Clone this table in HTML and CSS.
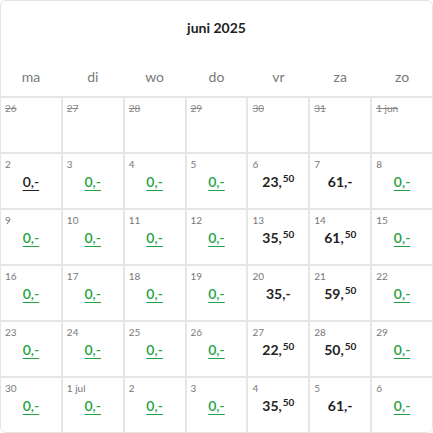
FILE: index.html
```html
<!DOCTYPE html>
<html lang="nl">
<head>
<meta charset="utf-8">
<link rel="stylesheet" href="styles.css">
</head>
<body>
<div class="card">
  <div class="head">
    <div class="title">juni 2025</div>
    <div class="weekdays">
      <span>ma</span><span>di</span><span>wo</span><span>do</span><span>vr</span><span>za</span><span>zo</span>
    </div>
  </div>
  <div class="grid">
    <div class="cell past"><span class="num">26</span></div>
    <div class="cell past"><span class="num">27</span></div>
    <div class="cell past"><span class="num">28</span></div>
    <div class="cell past"><span class="num">29</span></div>
    <div class="cell past"><span class="num">30</span></div>
    <div class="cell past"><span class="num">31</span></div>
    <div class="cell past"><span class="num">1 jun</span></div>

    <div class="cell"><span class="num">2</span><a class="price sel">0,-</a></div>
    <div class="cell"><span class="num">3</span><a class="price free">0,-</a></div>
    <div class="cell"><span class="num">4</span><a class="price free">0,-</a></div>
    <div class="cell"><span class="num">5</span><a class="price free">0,-</a></div>
    <div class="cell"><span class="num">6</span><span class="price">23,<sup>50</sup></span></div>
    <div class="cell"><span class="num">7</span><span class="price">61,-</span></div>
    <div class="cell"><span class="num">8</span><a class="price free">0,-</a></div>

    <div class="cell"><span class="num">9</span><a class="price free">0,-</a></div>
    <div class="cell"><span class="num">10</span><a class="price free">0,-</a></div>
    <div class="cell"><span class="num">11</span><a class="price free">0,-</a></div>
    <div class="cell"><span class="num">12</span><a class="price free">0,-</a></div>
    <div class="cell"><span class="num">13</span><span class="price">35,<sup>50</sup></span></div>
    <div class="cell"><span class="num">14</span><span class="price">61,<sup>50</sup></span></div>
    <div class="cell"><span class="num">15</span><a class="price free">0,-</a></div>

    <div class="cell"><span class="num">16</span><a class="price free">0,-</a></div>
    <div class="cell"><span class="num">17</span><a class="price free">0,-</a></div>
    <div class="cell"><span class="num">18</span><a class="price free">0,-</a></div>
    <div class="cell"><span class="num">19</span><a class="price free">0,-</a></div>
    <div class="cell"><span class="num">20</span><span class="price">35,-</span></div>
    <div class="cell"><span class="num">21</span><span class="price">59,<sup>50</sup></span></div>
    <div class="cell"><span class="num">22</span><a class="price free">0,-</a></div>

    <div class="cell"><span class="num">23</span><a class="price free">0,-</a></div>
    <div class="cell"><span class="num">24</span><a class="price free">0,-</a></div>
    <div class="cell"><span class="num">25</span><a class="price free">0,-</a></div>
    <div class="cell"><span class="num">26</span><a class="price free">0,-</a></div>
    <div class="cell"><span class="num">27</span><span class="price">22,<sup>50</sup></span></div>
    <div class="cell"><span class="num">28</span><span class="price">50,<sup>50</sup></span></div>
    <div class="cell"><span class="num">29</span><a class="price free">0,-</a></div>

    <div class="cell"><span class="num">30</span><a class="price free">0,-</a></div>
    <div class="cell"><span class="num">1 jul</span><a class="price free">0,-</a></div>
    <div class="cell"><span class="num">2</span><a class="price free">0,-</a></div>
    <div class="cell"><span class="num">3</span><a class="price free">0,-</a></div>
    <div class="cell"><span class="num">4</span><span class="price">35,<sup>50</sup></span></div>
    <div class="cell"><span class="num">5</span><span class="price">61,-</span></div>
    <div class="cell"><span class="num">6</span><a class="price free">0,-</a></div>
  </div>
</div>
</body>
</html>
```

FILE: styles.css
```css
* { box-sizing: border-box; }
html, body { margin: 0; padding: 0; background: #ffffff; }
body { font-family: "Lato", "Open Sans", sans-serif; color: #222; }

.card {
  width: 433px;
  border: 1px solid #e4e4e4;
  border-radius: 6px;
  overflow: hidden;
  background: #fff;
}

.head {
  height: 95px;
  display: flex;
  flex-direction: column;
}

.title {
  height: 56px;
  display: flex;
  align-items: center;
  justify-content: center;
  font-weight: 700;
  font-size: 14px;
  color: #222;
  padding-bottom: 4px;
}

.weekdays {
  flex: 1;
  display: grid;
  grid-template-columns: repeat(7, 1fr);
  column-gap: 2px;
  align-items: center;
  font-size: 14px;
  color: #7a7a7a;
  text-align: center;
  padding-bottom: 1px;
}

.grid {
  display: grid;
  grid-template-columns: repeat(7, 1fr);
  grid-auto-rows: 54px;
  gap: 2px;
  padding-top: 2px;
  background: #e6e6e6;
}

.cell {
  background: #fff;
  position: relative;
  display: flex;
  flex-direction: column;
  align-items: center;
  padding-top: 18px;
}

.num {
  position: absolute;
  left: 4px;
  top: 4px;
  font-size: 10px;
  color: #777;
}

.past .num { text-decoration: line-through; color: #888; }

.price {
  font-size: 14px;
  font-weight: 700;
  color: #222;
  line-height: 20px;
}

.price sup {
  font-size: 10px;
  line-height: 0;
  vertical-align: 5px;
  margin-left: 1px;
}

a.price { text-decoration: underline; text-underline-offset: 3px; text-decoration-thickness: 1px; font-weight: 600; }
.free { color: #23a345; }
.sel { color: #222; }
```
